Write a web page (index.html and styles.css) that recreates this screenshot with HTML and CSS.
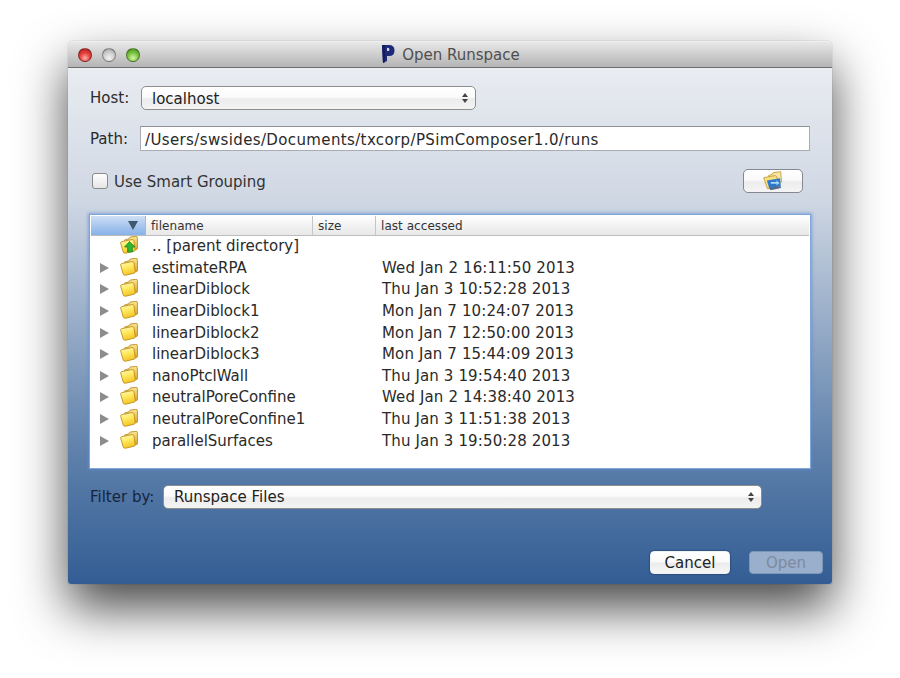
FILE: index.html
```html
<!DOCTYPE html>
<html lang="en">
<head>
<meta charset="utf-8">
<title>Open Runspace</title>
<link rel="stylesheet" href="styles.css">
</head>
<body>
<svg class="defs" width="0" height="0" aria-hidden="true">
  <defs>
    <linearGradient id="fy" x1="0" y1="0" x2="0.3" y2="1">
      <stop offset="0" stop-color="#fffbd0"/>
      <stop offset="0.5" stop-color="#ffe95f"/>
      <stop offset="1" stop-color="#f3c72c"/>
    </linearGradient>
    <linearGradient id="fb" x1="0" y1="0" x2="0" y2="1">
      <stop offset="0" stop-color="#fbe892"/>
      <stop offset="1" stop-color="#d59a20"/>
    </linearGradient>
    <symbol id="folder" viewBox="0 0 18 18">
      <path d="M4.5 4 L9 2.8 L10.2 1 L16 0.3 Q17.4 0.3 17.4 1.6 L17.6 12 Q17.6 13.4 16.2 13.7 L6 15.5 Z" fill="url(#fb)" stroke="#b48522" stroke-width="0.8"/>
      <path d="M0.7 7.2 Q0.4 5.9 1.8 5.6 L12 3.6 Q13.6 3.4 13.9 4.7 L15.2 13.4 Q15.4 14.8 14 15.2 L5.6 17.2 Q3.9 17.6 3.2 16 Z" fill="url(#fy)" stroke="#c2901e" stroke-width="0.9"/>
    </symbol>
  </defs>
</svg>
<main class="window">
  <header class="titlebar">
    <div class="lights">
      <span class="light red"></span>
      <span class="light gray"></span>
      <span class="light green"></span>
    </div>
    <div class="title">
      <svg class="logo" width="14" height="20" viewBox="0 0 14 20" aria-hidden="true">
        <path d="M1 1 H8 Q13.5 1 13.5 6.5 Q13.5 12 8 12 H6 V7 Q8.5 7.5 8.5 5.5 Q8.5 3.5 6 3.7 V17 L2 19 Z" fill="#1c2a78"/>
        <path d="M1 1 H4 V18 L2 19 Z" fill="#141d5c"/>
      </svg>
      <span>Open Runspace</span>
    </div>
  </header>
  <div class="content">
    <div class="host-row">
      <label class="field-label host-label">Host:</label>
      <div class="select host-select">
        <span class="select-text">localhost</span>
        <span class="arrows"><i class="up"></i><i class="down"></i></span>
      </div>
    </div>
    <div class="path-row">
      <label class="field-label path-label">Path:</label>
      <div class="path-input">/Users/swsides/Documents/txcorp/PSimComposer1.0/runs</div>
    </div>
    <div class="group-row">
      <div class="check-wrap">
        <span class="checkbox"></span>
        <span class="check-label">Use Smart Grouping</span>
      </div>
      <button class="browse" type="button" aria-label="Browse">
        <svg width="22" height="22" viewBox="0 0 20 20" aria-hidden="true">
          <path d="M6 5 L9 4 L10 2.5 L17 1.5 L17.8 11 L8 13 Z" fill="#f5e6a8" stroke="#c79c36" stroke-width="0.8"/>
          <path d="M1.5 7 L12 5 L13.5 6 L15 15 L5 17 Z" fill="#f6df80" stroke="#c79c36" stroke-width="0.8"/>
          <path d="M4.5 9.5 L16.5 7.5 L17 14.5 L6.5 16.5 Z" fill="#2f77c9"/>
          <path d="M8 11 H13.5 L12.5 9.2 L16 11.8 L13 14 L13.5 12.5 H8 Z" fill="#a9dcf5"/>
          <path d="M6.5 16.5 L17 14.5 L17.2 16.4 L8 18.4 Z" fill="#1f3f74" opacity="0.75"/>
        </svg>
      </button>
    </div>
    <section class="table">
      <div class="thead">
        <div class="th sort"><span class="sort-arrow"></span></div>
        <div class="th name">filename</div>
        <div class="th size">size</div>
        <div class="th date">last accessed</div>
      </div>
      <div class="tbody">
        <div class="row">
          <span class="disc none"></span>
          <svg class="ficon" width="18" height="18" aria-hidden="true"><use href="#folder"/><path d="M9.5 5.5 L15 11 H12.4 V16 H7.6 V11 H4.5 Z" fill="#2fb52f" stroke="#1c7f1c" stroke-width="0.7"/></svg>
          <span class="fname">.. [parent directory]</span>
          <span class="fdate"></span>
        </div>
        <div class="row"><span class="disc"></span><svg class="ficon" width="18" height="18" aria-hidden="true"><use href="#folder"/></svg><span class="fname">estimateRPA</span><span class="fdate">Wed Jan 2 16:11:50 2013</span></div>
        <div class="row"><span class="disc"></span><svg class="ficon" width="18" height="18" aria-hidden="true"><use href="#folder"/></svg><span class="fname">linearDiblock</span><span class="fdate">Thu Jan 3 10:52:28 2013</span></div>
        <div class="row"><span class="disc"></span><svg class="ficon" width="18" height="18" aria-hidden="true"><use href="#folder"/></svg><span class="fname">linearDiblock1</span><span class="fdate">Mon Jan 7 10:24:07 2013</span></div>
        <div class="row"><span class="disc"></span><svg class="ficon" width="18" height="18" aria-hidden="true"><use href="#folder"/></svg><span class="fname">linearDiblock2</span><span class="fdate">Mon Jan 7 12:50:00 2013</span></div>
        <div class="row"><span class="disc"></span><svg class="ficon" width="18" height="18" aria-hidden="true"><use href="#folder"/></svg><span class="fname">linearDiblock3</span><span class="fdate">Mon Jan 7 15:44:09 2013</span></div>
        <div class="row"><span class="disc"></span><svg class="ficon" width="18" height="18" aria-hidden="true"><use href="#folder"/></svg><span class="fname">nanoPtclWall</span><span class="fdate">Thu Jan 3 19:54:40 2013</span></div>
        <div class="row"><span class="disc"></span><svg class="ficon" width="18" height="18" aria-hidden="true"><use href="#folder"/></svg><span class="fname">neutralPoreConfine</span><span class="fdate">Wed Jan 2 14:38:40 2013</span></div>
        <div class="row"><span class="disc"></span><svg class="ficon" width="18" height="18" aria-hidden="true"><use href="#folder"/></svg><span class="fname">neutralPoreConfine1</span><span class="fdate">Thu Jan 3 11:51:38 2013</span></div>
        <div class="row"><span class="disc"></span><svg class="ficon" width="18" height="18" aria-hidden="true"><use href="#folder"/></svg><span class="fname">parallelSurfaces</span><span class="fdate">Thu Jan 3 19:50:28 2013</span></div>
      </div>
    </section>
    <div class="filter-row">
      <label class="field-label filter-label">Filter by:</label>
      <div class="select filter-select">
        <span>Runspace Files</span>
        <span class="arrows"><i class="up"></i><i class="down"></i></span>
      </div>
    </div>
    <div class="actions">
      <button class="btn cancel" type="button">Cancel</button>
      <button class="btn open" type="button">Open</button>
    </div>
  </div>
</main>
</body>
</html>
```
FILE: styles.css
```css
* { box-sizing: border-box; }
html, body { margin: 0; padding: 0; background: #fff; }
body {
  width: 900px;
  height: 678px;
  overflow: hidden;
  padding: 41px 68px 0;
  font-family: "DejaVu Sans", sans-serif;
  font-size: 15px;
  color: #222;
}
.defs { display: block; height: 0; width: 0; }
.window {
  width: 764px;
  height: 543px;
  border-radius: 5px 5px 3px 3px;
  box-shadow: 0 24px 50px rgba(0,0,0,.72), 0 0 1px rgba(0,0,0,.5);
  display: flex;
  flex-direction: column;
  overflow: visible;
}
.titlebar {
  height: 27px;
  flex: none;
  position: relative;
  display: flex;
  align-items: center;
  justify-content: center;
  background: linear-gradient(#e8e8e8, #b4b4b4);
  border-top: 1px solid #efefef;
  border-bottom: 1px solid #6f6f6f;
  border-radius: 5px 5px 0 0;
}
.lights { position: absolute; left: 10px; top: 6px; display: flex; gap: 10px; }
.light { width: 14px; height: 14px; border-radius: 50%; border: 1px solid rgba(0,0,0,.35); }
.red { background: radial-gradient(circle at 50% 75%, #ffb0a8 0, #e8433d 45%, #a81c1c 100%); }
.gray { background: radial-gradient(circle at 50% 75%, #f2f2f2 0, #cfcfcf 50%, #989898 100%); }
.green { background: radial-gradient(circle at 50% 75%, #d9f5a8 0, #78c23e 50%, #3f8a1e 100%); }
.title { display: flex; align-items: center; gap: 7px; color: #4f4f4f; font-size: 15px; margin-left: 1px; }
.title .logo { margin-top: -1px; }
.content {
  flex: 1;
  display: flex;
  flex-direction: column;
  padding: 18px 22px 10px;
  background: linear-gradient(#e9ecf1 0, #d0d8e4 25%, #b6c4d7 36%, #5f81ab 74%, #335d94 100%);
  border-radius: 0 0 3px 3px;
}
.field-label { color: #2b2b2b; font-size: 15px; }
.host-row { display: flex; align-items: center; height: 24px; }
.host-label { width: 51px; }
.select {
  height: 24px;
  display: flex;
  align-items: center;
  justify-content: space-between;
  padding: 0 7px 0 10px;
  background: linear-gradient(#fff 0, #fbfbfb 45%, #ececec 55%, #f4f4f4 100%);
  border: 1px solid #8e8e8e;
  border-radius: 5px;
  color: #222;
}
.select-text { padding-top: 1px; }
.host-select { width: 335px; }
.arrows { display: flex; flex-direction: column; gap: 2px; }
.arrows i { display: block; width: 0; height: 0; border-left: 3px solid transparent; border-right: 3px solid transparent; }
.arrows .up { border-bottom: 4px solid #444; }
.arrows .down { border-top: 4px solid #444; }
.path-row { display: flex; align-items: center; height: 25px; margin-top: 16px; }
.path-label { width: 50px; padding-top: 1px; }
.path-input {
  width: 670px;
  height: 25px;
  line-height: 26px;
  padding-left: 4px;
  background: #fff;
  border: 1px solid #a9adb3;
  border-top-color: #8d9197;
  color: #2a2a2a;
  letter-spacing: .37px;
}
.group-row { display: flex; align-items: center; justify-content: space-between; height: 24px; margin-top: 18px; padding: 0 7px 0 2px; }
.check-wrap { display: flex; align-items: center; gap: 6px; }
.checkbox { width: 16px; height: 16px; border: 1px solid #8b8b8b; border-radius: 3px; background: linear-gradient(#fdfdfd, #e6e6e6); }
.check-label { color: #333; padding-top: 1px; }
.browse {
  width: 60px;
  height: 24px;
  padding: 0;
  display: flex;
  align-items: center;
  justify-content: center;
  background: linear-gradient(#fff 0, #fafafa 45%, #ececec 55%, #f5f5f5 100%);
  border: 1px solid #85898f;
  border-radius: 5px;
}
.table {
  width: 720px;
  height: 253px;
  margin-top: 22px;
  background: #fff;
  border: 1px solid #fff;
  box-shadow: 0 0 0 1px #7ea6d8, 0 0 3px 2px rgba(96,140,205,.65);
  display: flex;
  flex-direction: column;
}
.thead { display: flex; height: 20px; flex: none; font-size: 12px; color: #333; letter-spacing: .05px; background: linear-gradient(#fff, #f2f2f2 50%, #e8e8e8); border-bottom: 1px solid #bdbdbd; }
.th { height: 100%; line-height: 21px; padding-left: 5px; }
.sort { width: 55px; display: flex; align-items: center; justify-content: flex-end; padding-right: 7px; background: linear-gradient(#cfe0f5, #a9c8ee 50%, #86b2e8); border-right: 1px solid #a9b8c8; }
.sort-arrow { width: 0; height: 0; border-left: 5px solid transparent; border-right: 5px solid transparent; border-top: 9px solid #41566f; }
.name { width: 167px; border-right: 1px solid #c5c5c5; }
.size { width: 63px; border-right: 1px solid #c5c5c5; }
.date { flex: 1; }
.tbody { margin-top: -1px; }
.row { display: flex; align-items: center; height: 21.6px; padding-top: 1px; color: #2a2a2a; }
.disc { width: 0; height: 0; margin-left: 9px; border-top: 5px solid transparent; border-bottom: 5px solid transparent; border-left: 9px solid #8c8c8c; flex: none; }
.disc.none { border-color: transparent; }
.ficon { margin-left: 11px; flex: none; margin-top: -2px; }
.fname { margin-left: 14px; width: 230px; flex: none; }
.fdate { letter-spacing: .13px; }
.filter-row { display: flex; align-items: center; height: 24px; margin-top: 17px; }
.filter-label { width: 73px; color: #14253d; }
.filter-select { width: 599px; }
.actions { display: flex; justify-content: flex-end; gap: 19px; margin-top: auto; margin-right: -13px; }
.btn { height: 23px; padding: 0; font-family: inherit; font-size: 15px; border-radius: 4px; }
.cancel { width: 80px; color: #222; background: linear-gradient(#fff 0, #fafafa 45%, #ececec 55%, #f6f6f6 100%); border: 1px solid #eef0f3; box-shadow: 0 0 1px 1px rgba(25,45,80,.35); }
.open { width: 74px; color: #7c8ba1; background: #9aafcb; border: 1px solid #7d97b9; }
```
